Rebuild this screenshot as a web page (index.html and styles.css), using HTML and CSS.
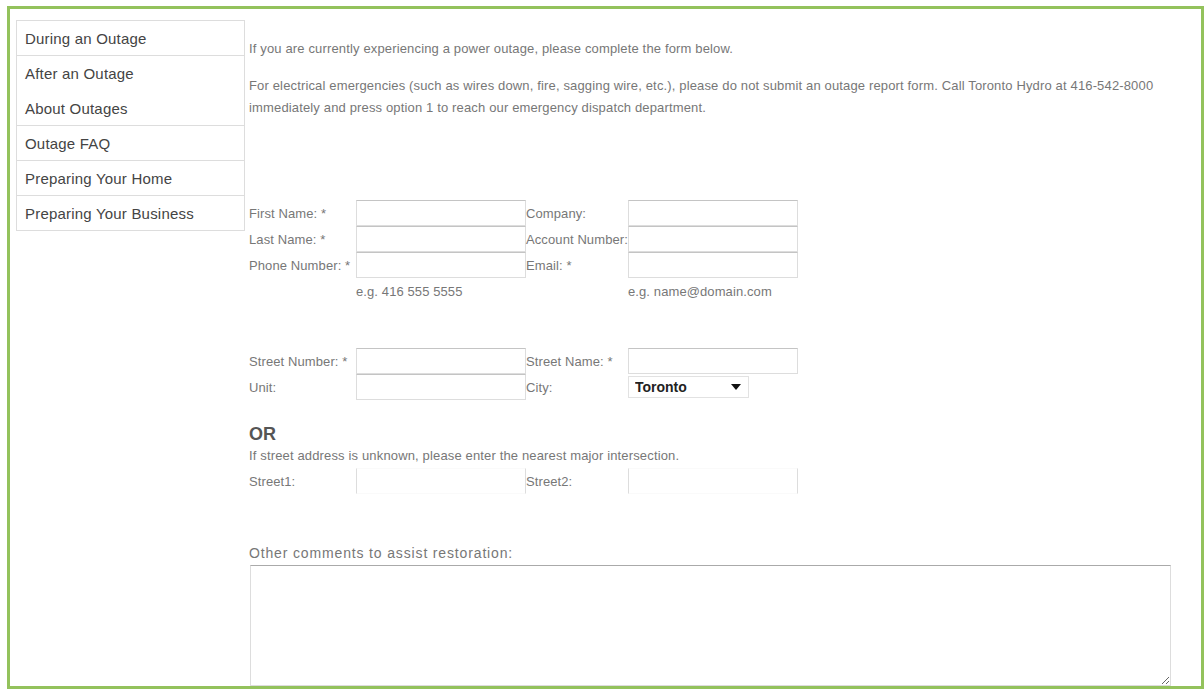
FILE: index.html
```html
<!DOCTYPE html>
<html lang="en">
<head>
<meta charset="utf-8">
<title>Report an Outage</title>
<link rel="stylesheet" href="styles.css">
</head>
<body>
<div class="frame">
  <nav class="side-nav">
    <a class="nav-item" href="#">During an Outage</a>
    <a class="nav-item nav-item--flush" href="#">After an Outage</a>
    <a class="nav-item" href="#">About Outages</a>
    <a class="nav-item" href="#">Outage FAQ</a>
    <a class="nav-item" href="#">Preparing Your Home</a>
    <a class="nav-item nav-item--last" href="#">Preparing Your Business</a>
  </nav>

  <main class="content">
    <p class="intro">If you are currently experiencing a power outage, please complete the form below.</p>
    <p class="intro">For electrical emergencies (such as wires down, fire, sagging wire, etc.), please do not submit an outage report form. Call Toronto Hydro at 416-542-8000 immediately and press option 1 to reach our emergency dispatch department.</p>

    <form class="outage-form">
      <div class="field-grid contact">
        <label class="lbl">First Name: *</label>
        <input class="txt" type="text">
        <label class="lbl">Company:</label>
        <input class="txt" type="text">

        <label class="lbl">Last Name: *</label>
        <input class="txt" type="text">
        <label class="lbl">Account Number:</label>
        <input class="txt" type="text">

        <label class="lbl">Phone Number: *</label>
        <input class="txt" type="text">
        <label class="lbl">Email: *</label>
        <input class="txt" type="text">

        <span></span>
        <span class="hint">e.g. 416 555 5555</span>
        <span></span>
        <span class="hint">e.g. name@domain.com</span>
      </div>

      <div class="field-grid address">
        <label class="lbl">Street Number: *</label>
        <input class="txt" type="text">
        <label class="lbl">Street Name: *</label>
        <input class="txt" type="text">

        <label class="lbl">Unit:</label>
        <input class="txt" type="text">
        <label class="lbl">City:</label>
        <span class="select-wrap">
          <select class="city">
            <option>Toronto</option>
          </select>
        </span>
      </div>

      <h3 class="or">OR</h3>
      <p class="note">If street address is unknown, please enter the nearest major intersection.</p>

      <div class="field-grid cross">
        <label class="lbl">Street1:</label>
        <input class="txt txt--open" type="text">
        <label class="lbl">Street2:</label>
        <input class="txt txt--open" type="text">
      </div>

      <label class="comments-lbl">Other comments to assist restoration:</label>
      <textarea class="comments"></textarea>
    </form>
  </main>
</div>
</body>
</html>
```

FILE: styles.css
```css
html, body {
  margin: 0;
  padding: 0;
  background: #fff;
}

body {
  font-family: "Liberation Sans", Arial, sans-serif;
  color: #777;
}

.frame {
  box-sizing: border-box;
  width: 1197px;
  height: 683px;
  margin: 6px 0 0 7px;
  border: 3px solid #93c25c;
  padding: 11px 30px 0 6px;
  display: grid;
  grid-template-columns: 229px 1fr;
  column-gap: 4px;
  align-items: start;
  overflow: hidden;
}

/* left navigation list */
.side-nav {
  display: flex;
  flex-direction: column;
  border: 1px solid #ddd;
  border-bottom: none;
}

.nav-item {
  display: flex;
  align-items: center;
  height: 34px;
  padding: 0 8px;
  border-bottom: 1px solid #ddd;
  font-size: 15px;
  letter-spacing: 0.2px;
  color: #444;
  text-decoration: none;
}

.nav-item--flush {
  border-bottom: none;
  height: 35px;
}

/* main column */
.content {
  padding-top: 18px;
  min-width: 0;
}

.intro {
  margin: 0 0 15px;
  font-size: 13px;
  letter-spacing: 0.15px;
  line-height: 22px;
  color: #777;
}

.outage-form {
  margin-top: 81px;
  display: flex;
  flex-direction: column;
  align-items: flex-start;
}

.field-grid {
  display: grid;
  grid-template-columns: 107px 170px 102px 170px;
  grid-auto-rows: 26px;
  align-items: center;
}

.lbl {
  font-size: 13px;
  letter-spacing: 0.1px;
  color: #777;
  white-space: nowrap;
}

.txt {
  box-sizing: border-box;
  width: 170px;
  height: 26px;
  margin: 0;
  border: 1px solid #ddd;
  border-top-color: #c4c4c4;
  background: #fff;
}

.txt--open {
  border-top-color: #fafafa;
  border-bottom-color: #fafafa;
}

.contact {
  grid-template-rows: 26px 26px 26px 23px;
}

.hint {
  align-self: end;
  font-size: 13px;
  letter-spacing: 0.1px;
  line-height: 18px;
  color: #777;
}

.address {
  margin-top: 47px;
}

.select-wrap {
  position: relative;
  width: 121px;
  height: 22px;
  align-self: center;
}

.city {
  appearance: none;
  -webkit-appearance: none;
  box-sizing: border-box;
  width: 121px;
  height: 22px;
  margin: 0;
  padding: 0 0 0 6px;
  border: 1px solid #e2e2e2;
  background: #fff;
  font-family: "Liberation Sans", Arial, sans-serif;
  font-size: 14px;
  font-weight: bold;
  color: #222;
}

.select-wrap::after {
  content: "";
  position: absolute;
  right: 8px;
  top: 8px;
  border-left: 5px solid transparent;
  border-right: 5px solid transparent;
  border-top: 6px solid #111;
}

.or {
  margin: 23px 0 0;
  font-size: 18px;
  line-height: 22px;
  font-weight: bold;
  color: #555;
}

.note {
  margin: 0 0 1px;
  font-size: 13px;
  letter-spacing: 0.15px;
  line-height: 22px;
  color: #777;
}

.comments-lbl {
  margin-top: 50px;
  font-size: 14px;
  line-height: 18px;
  letter-spacing: 0.85px;
  color: #777;
}

.comments {
  box-sizing: border-box;
  width: 921px;
  height: 121px;
  margin: 3px 0 0 1px;
  border: 1px solid #ddd;
  border-top-color: #aaa;
  resize: both;
}
```
